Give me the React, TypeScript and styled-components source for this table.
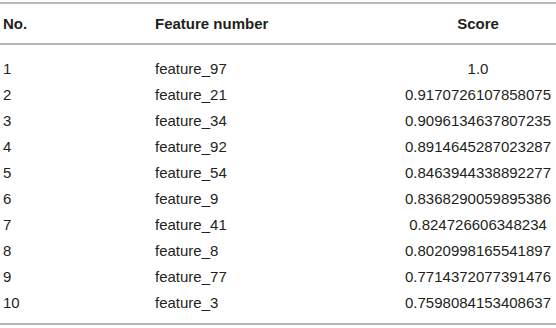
import styled, { createGlobalStyle } from 'styled-components';

const rows: [number, string, string][] = [
  [1, 'feature_97', '1.0'],
  [2, 'feature_21', '0.9170726107858075'],
  [3, 'feature_34', '0.9096134637807235'],
  [4, 'feature_92', '0.8914645287023287'],
  [5, 'feature_54', '0.8463944338892277'],
  [6, 'feature_9', '0.8368290059895386'],
  [7, 'feature_41', '0.824726606348234'],
  [8, 'feature_8', '0.8020998165541897'],
  [9, 'feature_77', '0.7714372077391476'],
  [10, 'feature_3', '0.7598084153408637'],
];

const App = () => {
  return (
    <>
      <GlobalStyle />
      <Table>
        <colgroup>
          <col style={{ width: 152 }} />
          <col style={{ width: 248 }} />
          <col />
        </colgroup>
        <thead>
          <tr>
            <HeadCell>No.</HeadCell>
            <HeadCell>Feature number</HeadCell>
            <HeadCell $center>Score</HeadCell>
          </tr>
        </thead>
        <tbody>
          {rows.map(([no, feature, score]) => (
            <Row key={no}>
              <Cell>{no}</Cell>
              <Cell>{feature}</Cell>
              <Cell $center>{score}</Cell>
            </Row>
          ))}
        </tbody>
      </Table>
    </>
  );
};

const GlobalStyle = createGlobalStyle`
  body {
    margin: 0;
    background: #ffffff;
    font-family: "Liberation Sans", Arial, sans-serif;
    color: #231f20;
  }
`;

const Table = styled.table`
  width: 556px;
  margin-top: 2px;
  border-collapse: collapse;
  table-layout: fixed;
  border-top: 2px solid #b8b8b8;
  border-bottom: 2px solid #b8b8b8;
  font-size: 15px;
`;

const HeadCell = styled.th<{ $center?: boolean }>`
  height: 39px;
  padding: 0 3px;
  text-align: ${({ $center }) => ($center ? 'center' : 'left')};
  font-weight: bold;
  border-bottom: 2px solid #b8b8b8;
  color: #231f20;
`;

const Row = styled.tr`
  &:first-child td {
    padding-top: 10px;
  }

  &:last-child td {
    padding-bottom: 8px;
  }
`;

const Cell = styled.td<{ $center?: boolean }>`
  height: 26px;
  padding: 0 3px;
  text-align: ${({ $center }) => ($center ? 'center' : 'left')};
  white-space: nowrap;
`;

export default App;
